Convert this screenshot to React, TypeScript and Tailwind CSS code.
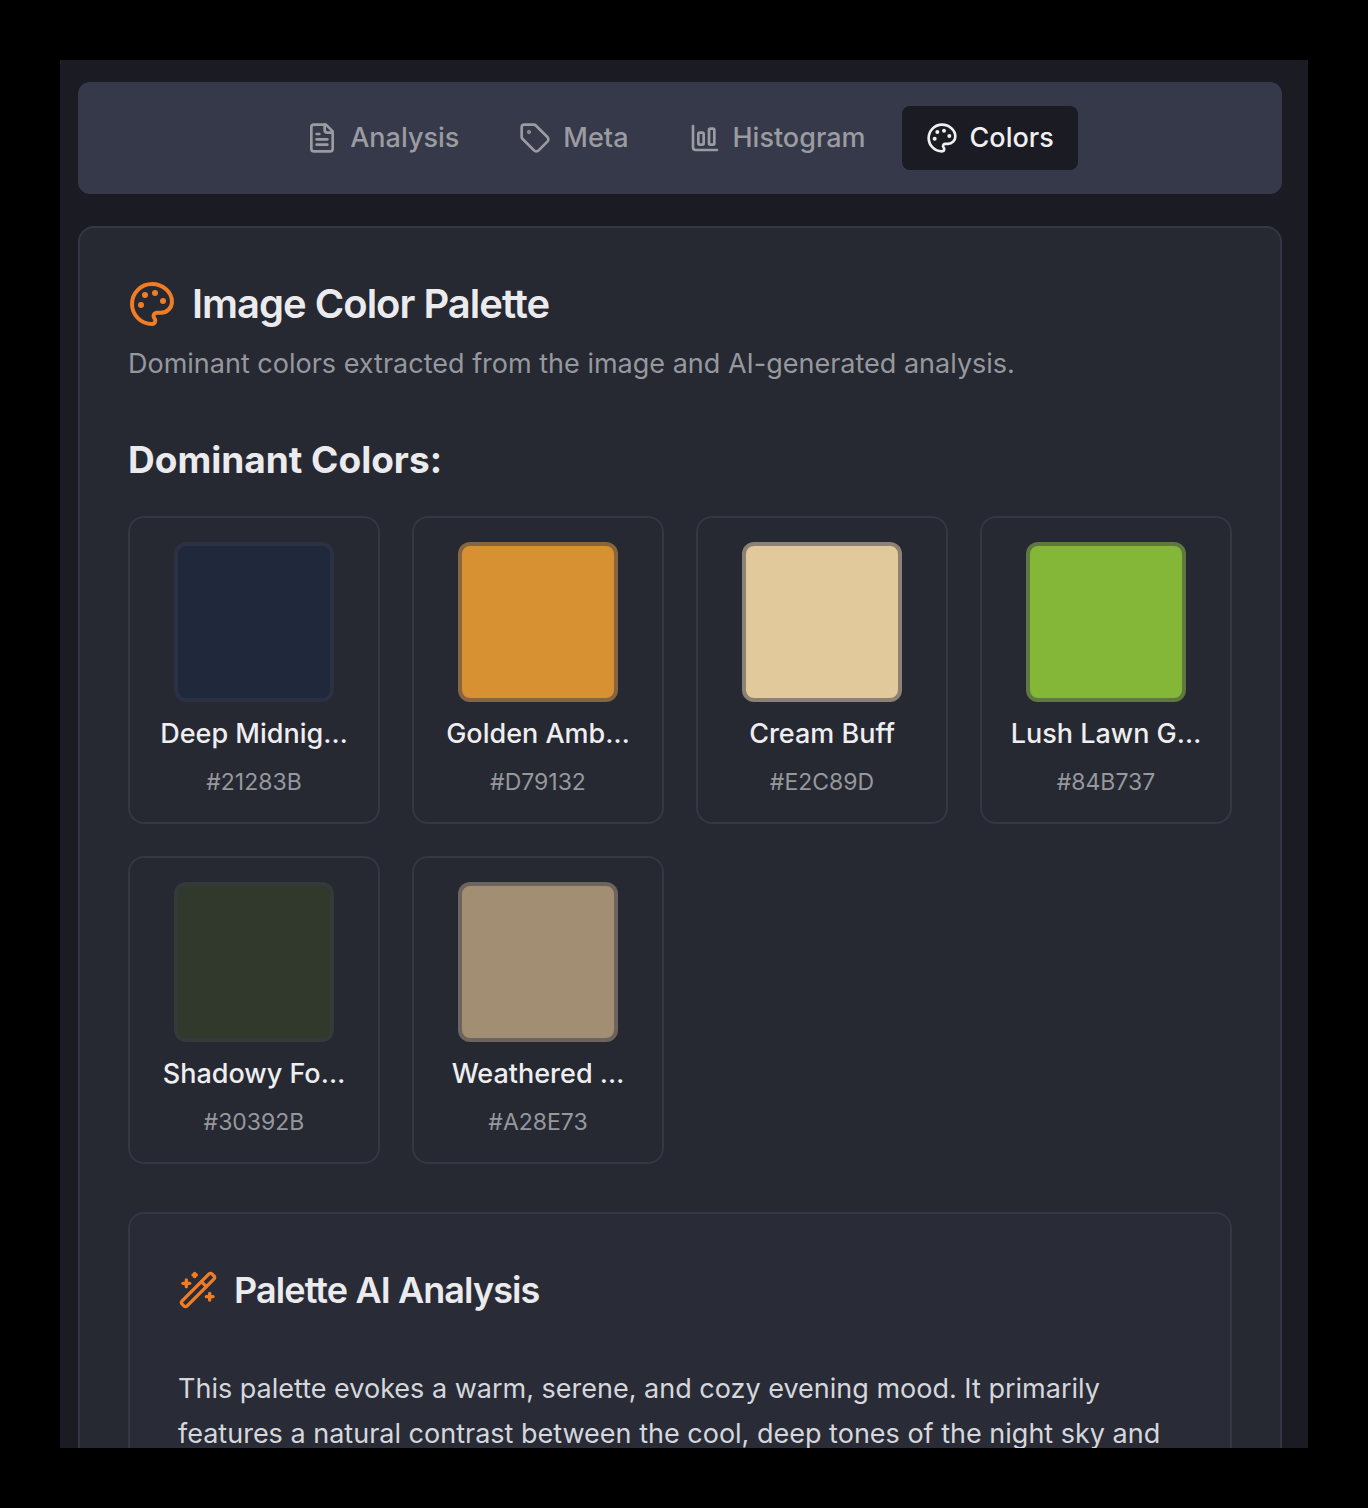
import { useState } from 'react';
import { ChartColumnBig, Tag, WandSparkles } from 'lucide-react';

interface IconProps {
  size?: number;
  className?: string;
}

interface Swatch {
  name: string;
  hex: string;
  fill: string;
}

function PaletteIcon({ size = 24, className }: IconProps) {
  return (
    <svg
      width={size}
      height={size}
      viewBox="0 0 24 24"
      fill="none"
      stroke="currentColor"
      strokeWidth="2"
      strokeLinecap="round"
      strokeLinejoin="round"
      className={className}
      aria-hidden="true"
    >
      <g fill="currentColor" stroke="none">
        <circle cx="13.5" cy="6.5" r="1.5" />
        <circle cx="17.5" cy="10.5" r="1.5" />
        <circle cx="8.5" cy="7.5" r="1.5" />
        <circle cx="6.5" cy="12.5" r="1.5" />
      </g>
      <path d="M12 2C6.5 2 2 6.5 2 12s4.5 10 10 10c.926 0 1.648-.746 1.648-1.688 0-.437-.18-.835-.437-1.125-.29-.289-.438-.652-.438-1.125a1.64 1.64 0 0 1 1.668-1.668h1.996c3.051 0 5.555-2.503 5.555-5.554C21.965 6.012 17.461 2 12 2z" />
    </svg>
  );
}

function FileTextIcon({ size = 24, className }: IconProps) {
  return (
    <svg
      width={size}
      height={size}
      viewBox="0 0 24 24"
      fill="none"
      stroke="currentColor"
      strokeWidth="2"
      strokeLinecap="round"
      strokeLinejoin="round"
      className={className}
      aria-hidden="true"
    >
      <path d="M15 2H6a2 2 0 0 0-2 2v16a2 2 0 0 0 2 2h12a2 2 0 0 0 2-2V7Z" />
      <path d="M14 2v4a2 2 0 0 0 2 2h4" />
      <path d="M10 9H8" />
      <path d="M16 13H8" />
      <path d="M16 17H8" />
    </svg>
  );
}

const tabs = [
  { id: 'analysis', label: 'Analysis', icon: FileTextIcon },
  { id: 'meta', label: 'Meta', icon: Tag },
  { id: 'histogram', label: 'Histogram', icon: ChartColumnBig },
  { id: 'colors', label: 'Colors', icon: PaletteIcon },
];

const swatches: Swatch[] = [
  { name: 'Deep Midnig…', hex: '#21283B', fill: 'bg-[#1f293b]' },
  { name: 'Golden Amb…', hex: '#D79132', fill: 'bg-[#d79132]' },
  { name: 'Cream Buff', hex: '#E2C89D', fill: 'bg-[#e1c99c]' },
  { name: 'Lush Lawn G…', hex: '#84B737', fill: 'bg-[#84b737]' },
  { name: 'Shadowy Fo…', hex: '#30392B', fill: 'bg-[#30392b]' },
  { name: 'Weathered …', hex: '#A28E73', fill: 'bg-[#a28e73]' },
];

function SwatchCard({ swatch }: { swatch: Swatch }) {
  return (
    <li className="flex flex-col items-center rounded-2xl border-2 border-[#343744] p-6">
      {/* the border is see-through, so it tints the colour under it */}
      <div className={`size-40 rounded-xl border-4 border-[#373a4a]/50 ${swatch.fill}`} />
      <p className="mt-3 text-center text-[27px] leading-10 font-medium whitespace-nowrap text-[#eeeef0]">
        {swatch.name}
      </p>
      <p className="mt-3 text-[23px] leading-8 text-[#97989d]">{swatch.hex}</p>
    </li>
  );
}

export default function App() {
  const [activeTab, setActiveTab] = useState('colors');

  return (
    <div className="h-screen bg-black p-[60px] font-[Inter,sans-serif]">
      <div className="h-full overflow-hidden bg-[#1b1b24] pt-[22px] pr-[26px] pl-[18px]">
        <div role="tablist" className="flex justify-center gap-3 rounded-xl bg-[#363949] py-6">
          {tabs.map(({ id, label, icon: Icon }) => (
            <button
              key={id}
              role="tab"
              aria-selected={activeTab === id}
              onClick={() => setActiveTab(id)}
              className={`flex h-16 items-center gap-3 rounded-lg px-6 text-[27px] font-medium ${
                activeTab === id ? 'bg-[#1b1b24] text-[#f0f0f2]' : 'text-[#9b9ca1]'
              }`}
            >
              <Icon size={32} />
              {label}
            </button>
          ))}
        </div>

        <main className="mt-8 rounded-2xl border-2 border-[#343744] bg-[#262832] p-12">
          <h1 className="flex items-center gap-4 pt-1 text-[40px] leading-12 font-semibold tracking-tight text-[#ebebed]">
            <PaletteIcon size={48} className="text-[#f07c24]" />
            Image Color Palette
          </h1>
          <p className="mt-4 text-[27px] leading-10 text-[#97989d]">
            Dominant colors extracted from the image and AI-generated analysis.
          </p>

          <h2 className="mt-12 text-[37px] leading-14 font-bold text-[#ebebed]">Dominant Colors:</h2>
          <ul className="mt-7 grid grid-cols-4 gap-8">
            {swatches.map((swatch) => (
              <SwatchCard key={swatch.hex} swatch={swatch} />
            ))}
          </ul>

          <section className="mt-12 rounded-2xl border-2 border-[#343744] bg-[#292c37] p-12">
            <h3 className="flex items-center gap-4 pt-2 text-4xl font-semibold tracking-tight text-[#ebebed]">
              <WandSparkles size={40} className="text-[#f07c24]" />
              Palette AI Analysis
            </h3>
            <p className="mt-14 text-[27px] leading-[45px] text-[#d6d7dc]">
              This palette evokes a warm, serene, and cozy evening mood. It primarily features a natural
              contrast between the cool, deep tones of the night sky and
            </p>
          </section>
        </main>
      </div>
    </div>
  );
}
